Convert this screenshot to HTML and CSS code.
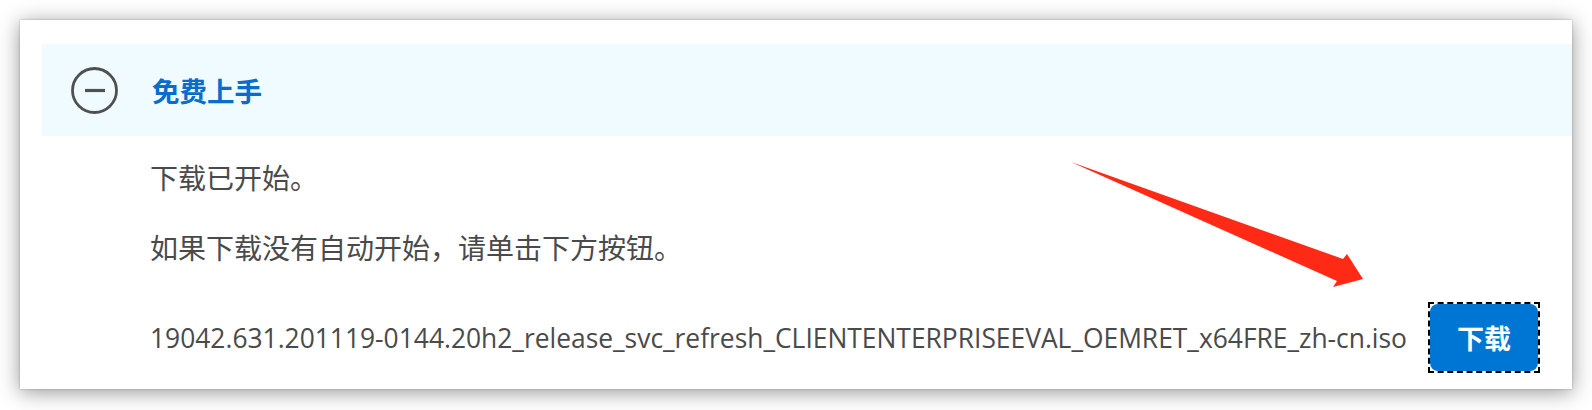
FILE: index.html
```html
<!DOCTYPE html>
<html lang="zh-CN">
<head>
<meta charset="utf-8">
<title>免费上手</title>
<link rel="stylesheet" href="styles.css">
</head>
<body>
<div class="card">
  <div class="panel-head">
    <svg class="toggle" width="47" height="47" viewBox="0 0 47 47">
      <circle cx="23.5" cy="23.5" r="22" fill="none" stroke="#505050" stroke-width="2.8"/>
      <line x1="14" y1="23.5" x2="34" y2="23.5" stroke="#505050" stroke-width="3.2"/>
    </svg>
    <h2 class="title">免费上手</h2>
  </div>
  <div class="panel-body">
    <p class="line first">下载已开始。</p>
    <p class="line second">如果下载没有自动开始，请单击下方按钮。</p>
    <div class="file-row">
      <span class="file-name">19042.631.201119-0144.20h2_release_svc_refresh_CLIENTENTERPRISEEVAL_OEMRET_x64FRE_zh-cn.iso</span>
      <span class="focus-ring"><button class="dl-btn">下载</button></span>
    </div>
  </div>
</div>
<svg class="arrow" width="1592" height="410" viewBox="0 0 1592 410">
  <polygon points="1071,162 1343,259 1347,254 1363,279 1333,287 1337,281" fill="#ff2a16"/>
</svg>
</body>
</html>
```
FILE: styles.css
```css
html, body {
  margin: 0;
  padding: 0;
  background: #ffffff;
}
body {
  width: 1592px;
  height: 410px;
  overflow: hidden;
  position: relative;
  font-family: "Open Sans", "Noto Sans CJK SC", sans-serif;
  color: #4a4a4a;
}
.card {
  margin: 20px 0 0 20px;
  width: 1552px;
  height: 369px;
  box-sizing: border-box;
  padding: 24px 0 0 22px;
  background: #ffffff;
  box-shadow: 0 3px 20px rgba(0, 0, 0, 0.42), 0 0 2px rgba(0, 0, 0, 0.25);
}
.panel-head {
  height: 92px;
  background: #effbff;
  display: flex;
  align-items: center;
  padding-left: 29px;
}
.toggle {
  display: block;
  flex: none;
}
.title {
  margin: 0 0 0 34px;
  font-family: "Noto Sans CJK SC", sans-serif;
  font-size: 27.5px;
  font-weight: 700;
  color: #0a6ccc;
  line-height: 36px;
}
.panel-body {
  padding: 21px 32px 0 108px;
}
.line {
  margin: 0;
  font-family: "Noto Sans CJK SC", sans-serif;
  font-size: 28px;
  line-height: 40px;
}
.second {
  margin-top: 30px;
}
.file-row {
  margin-top: 35px;
  display: flex;
  align-items: center;
  height: 71px;
}
.file-name {
  font-size: 26.4px;
  line-height: 40px;
  white-space: nowrap;
}
.focus-ring {
  margin-left: auto;
  border: 2px dashed #000000;
  display: block;
  line-height: 0;
}
.dl-btn {
  width: 108px;
  height: 67px;
  border: none;
  border-radius: 8px;
  background: #0076d4;
  color: #ffffff;
  font-family: "Noto Sans CJK SC", sans-serif;
  font-size: 27px;
  font-weight: 700;
  padding: 0;
  display: block;
}
.arrow {
  position: absolute;
  left: 0;
  top: 0;
  pointer-events: none;
}
```
